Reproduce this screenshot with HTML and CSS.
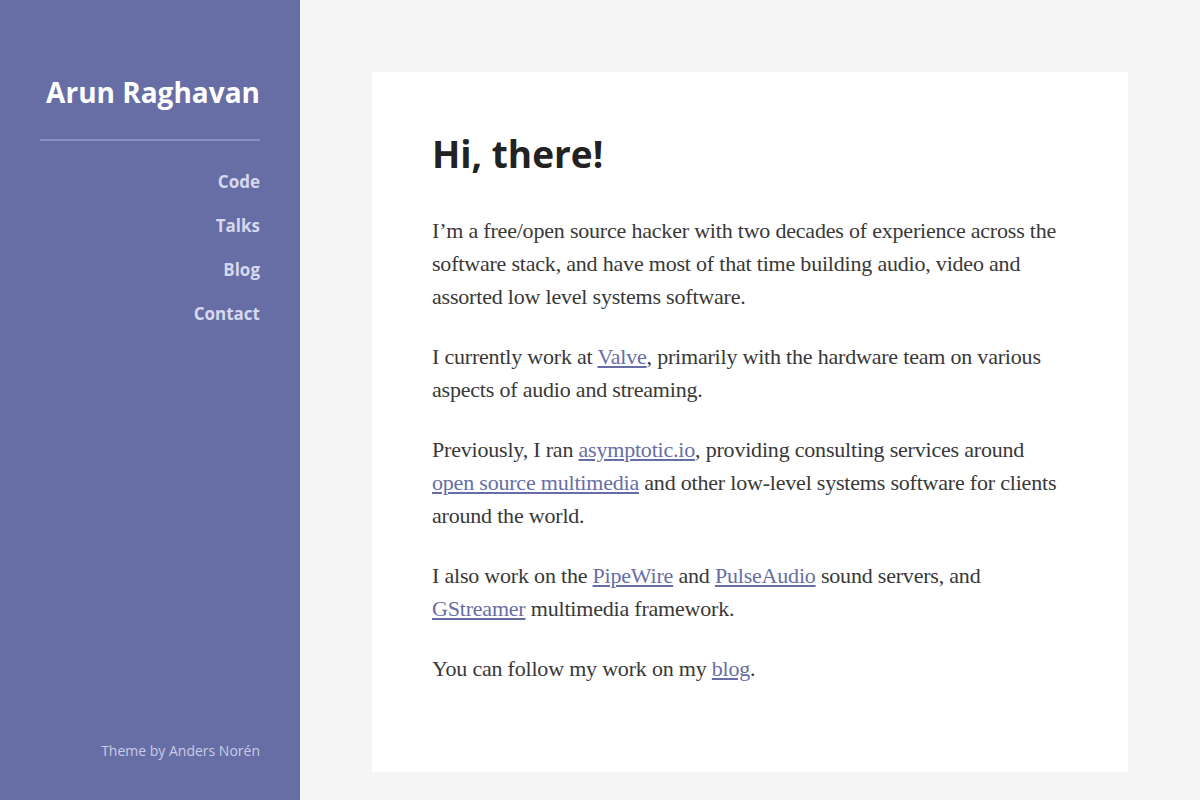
FILE: index.html
```html
<!DOCTYPE html>
<html lang="en">
<head>
    <meta charset="UTF-8">
    <meta name="viewport" content="width=device-width, initial-scale=1.0">
    <title>Arun Raghavan</title>
    <link rel="stylesheet" href="styles.css">
</head>
<body>
    <div class="page">
        <aside class="sidebar">
            <h1 class="site-title">Arun Raghavan</h1>
            <nav class="nav">
                <a href="#">Code</a>
                <a href="#">Talks</a>
                <a href="#">Blog</a>
                <a href="#">Contact</a>
            </nav>
            <p class="credit">Theme by Anders Norén</p>
        </aside>
        <main class="content">
            <article class="card">
                <h2>Hi, there!</h2>
                <p>I’m a free/open source hacker with two decades of experience across the software stack, and have most of that time building audio, video and assorted low level systems software.</p>
                <p>I currently work at <a href="#">Valve</a>, primarily with the hardware team on various aspects of audio and streaming.</p>
                <p>Previously, I ran <a href="#">asymptotic.io</a>, providing consulting services around <a href="#">open source multimedia</a> and other low-level systems software for clients around the world.</p>
                <p>I also work on the <a href="#">PipeWire</a> and <a href="#">PulseAudio</a> sound servers, and <a href="#">GStreamer</a> multimedia framework.</p>
                <p>You can follow my work on my <a href="#">blog</a>.</p>
            </article>
        </main>
    </div>
</body>
</html>
```

FILE: styles.css
```css
body {
    margin: 0;
    background-color: #f5f5f5;
    font-family: "Liberation Serif", serif;
    color: #383838;
}
.page {
    display: flex;
    min-height: 100vh;
}
.sidebar {
    width: 300px;
    flex-shrink: 0;
    box-sizing: border-box;
    height: 100vh;
    padding: 72px 40px 40px;
    background-color: #676ea5;
    display: flex;
    flex-direction: column;
    text-align: right;
    font-family: "Open Sans", sans-serif;
}
.site-title {
    margin: 0;
    padding-bottom: 27px;
    border-bottom: 2px solid #8a90c2;
    font-size: 28px;
    line-height: 40px;
    font-weight: 700;
    color: #fff;
}
.nav {
    display: flex;
    flex-direction: column;
    gap: 20px;
    padding-top: 29px;
}
.nav a {
    color: #d6d8ee;
    text-decoration: none;
    font-weight: 700;
    font-size: 17px;
    line-height: 24px;
}
.credit {
    margin: auto 0 0;
    font-size: 14px;
    color: #c9cce6;
}
.content {
    flex: 1;
    padding: 72px 72px 28px;
}
.card {
    background: #fff;
    padding: 60px;
}
.card h2 {
    margin: 0 0 38px;
    font-family: "Open Sans", sans-serif;
    font-size: 37px;
    line-height: 44px;
    font-weight: 700;
    color: #222;
}
.card p {
    margin: 0 0 27px;
    font-size: 22px;
    line-height: 33px;
    letter-spacing: -0.2px;
}
.card a {
    color: #676ea5;
}
```
